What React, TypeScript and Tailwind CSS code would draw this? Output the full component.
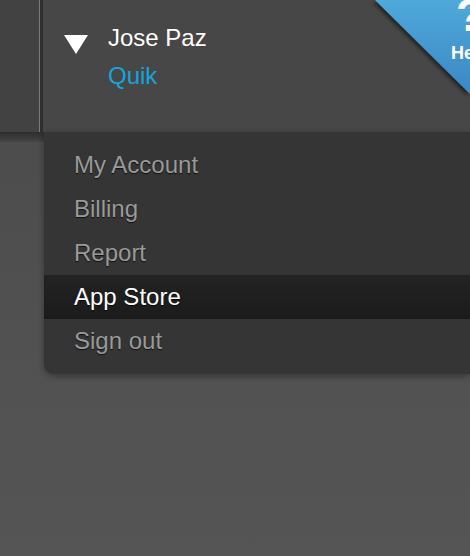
import React from "react";

const MENU_ITEMS = [
  { label: "My Account", active: false },
  { label: "Billing", active: false },
  { label: "Report", active: false },
  { label: "App Store", active: true },
  { label: "Sign out", active: false },
];

function HelpCorner() {
  return (
    <div className="absolute right-0 top-0 h-[100px] w-[100px] overflow-hidden">
      <svg width="100" height="100" viewBox="0 0 100 100" className="absolute left-0 top-0">
        <defs>
          <linearGradient id="helpBlue" x1="0" y1="0" x2="0" y2="1">
            <stop offset="0" stopColor="#4fa9da" />
            <stop offset="1" stopColor="#3b87c4" />
          </linearGradient>
          <filter id="helpShadow" x="-20%" y="-20%" width="140%" height="140%">
            <feDropShadow dx="-2" dy="2" stdDeviation="2" floodColor="#000" floodOpacity="0.6" />
          </filter>
        </defs>
        <polygon points="5,0 100,0 100,94" fill="url(#helpBlue)" filter="url(#helpShadow)" />
      </svg>
      <span className="absolute left-[86px] top-[-8px] text-[46px] font-bold leading-none text-white">?</span>
      <span className="absolute left-[81px] top-[44px] text-[18px] font-bold leading-none text-white">Help</span>
    </div>
  );
}

export default function App() {
  return (
    <div
      className="relative h-[556px] w-[470px] overflow-hidden bg-gradient-to-b from-[#4a4a4a] to-[#555555]"
      style={{ fontFamily: '"Liberation Sans", Arial, sans-serif' }}
    >
      <div className="flex h-[132px] bg-[#474747]">
        <div className="w-[40px] border-r border-[#7a7a7a] bg-[#424242]" />
        <div className="w-[3px] bg-[#2f2f2f]" />
        <div className="flex flex-1 gap-[20px] pl-[21px] pt-[22px]">
          <svg width="24" height="19" viewBox="0 0 24 19" className="mt-[13px]">
            <polygon points="0,0 24,0 12,19" fill="#ffffff" />
          </svg>
          <div className="flex flex-col gap-[10px]">
            <span className="text-[24px] leading-[32px] text-white">Jose Paz</span>
            <span className="text-[24px] leading-[24px] text-[#14a5dc]">Quik</span>
          </div>
        </div>
      </div>

      <div className="flex">
        <div className="h-[10px] w-[44px] bg-gradient-to-b from-[#2d2d2d] to-[#454545]" />
        <div className="flex-1 rounded-bl-[10px] bg-[#353535] pb-[11px] pt-[11px] shadow-[0_2px_6px_rgba(0,0,0,0.35)]">
          {MENU_ITEMS.map((item) => (
            <div
              key={item.label}
              className={
                item.active
                  ? "flex h-[44px] items-center bg-gradient-to-b from-[#232323] to-[#1b1b1b] pl-[30px] text-white"
                  : "flex h-[44px] items-center pl-[30px] text-[#9a9a9a]"
              }
            >
              <span className="text-[24px] leading-none [text-shadow:0_1px_1px_rgba(0,0,0,0.7)]">{item.label}</span>
            </div>
          ))}
        </div>
      </div>

      <HelpCorner />
    </div>
  );
}
